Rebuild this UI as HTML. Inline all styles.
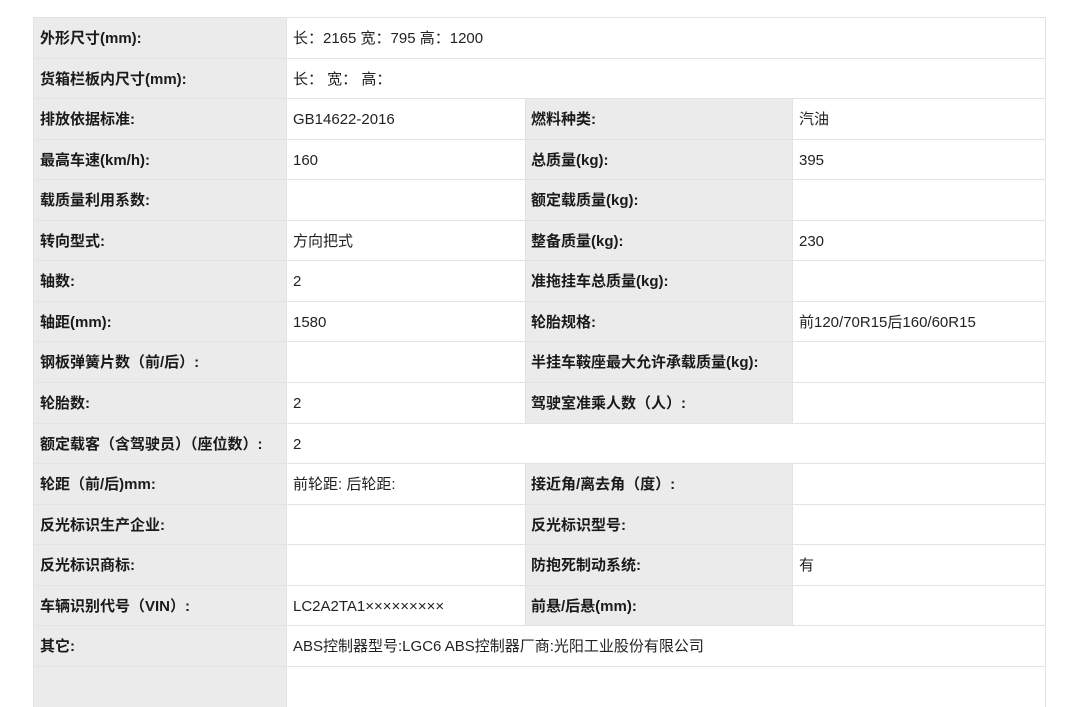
<!DOCTYPE html>
<html><head><meta charset="utf-8"><style>
body{margin:0;background:#fff;width:1080px;height:674px;overflow:hidden;font-family:"Liberation Sans","Noto Sans CJK SC",sans-serif;font-size:15px;color:#222}
.r{position:absolute;left:33px;width:1011px;height:40px;border-top:1px solid #e3e3e3;border-left:1px solid #e3e3e3;border-right:1px solid #e3e3e3}
.c{position:absolute;top:0;height:40px;line-height:41px;padding-left:6px;box-sizing:border-box;white-space:nowrap}
.l{background:#ebebeb;font-weight:bold;color:#1a1a1a}
.a{left:0;width:252px}.b{left:252px;width:239px;border-left:1px solid #e3e3e3}
.d{left:491px;width:267px;border-left:1px solid #e3e3e3;padding-left:5px}.e{left:758px;width:253px;border-left:1px solid #e3e3e3}
.w{left:252px;width:759px;border-left:1px solid #e3e3e3}
</style></head><body>
<div id="t"></div>
<script>
var rows=[
["外形尺寸(mm):","长：2165 宽：795 高：1200"],
["货箱栏板内尺寸(mm):","长：  宽：  高："],
["排放依据标准:","GB14622-2016","燃料种类:","汽油"],
["最高车速(km/h):","160","总质量(kg):","395"],
["载质量利用系数:","","额定载质量(kg):",""],
["转向型式:","方向把式","整备质量(kg):","230"],
["轴数:","2","准拖挂车总质量(kg):",""],
["轴距(mm):","1580","轮胎规格:","前120/70R15后160/60R15"],
["钢板弹簧片数（前/后）:","","半挂车鞍座最大允许承载质量(kg):",""],
["轮胎数:","2","驾驶室准乘人数（人）:",""],
["额定载客（含驾驶员）（座位数）:","2"],
["轮距（前/后)mm:","前轮距: 后轮距:","接近角/离去角（度）:",""],
["反光标识生产企业:","","反光标识型号:",""],
["反光标识商标:","","防抱死制动系统:","有"],
["车辆识别代号（VIN）:","LC2A2TA1×××××××××","前悬/后悬(mm):",""],
["其它:","ABS控制器型号:LGC6 ABS控制器厂商:光阳工业股份有限公司"],
["",""]];
var h="";
rows.forEach(function(r,i){
 var top=(17+i*40.56).toFixed(2);
 h+='<div class="r" style="top:'+top+'px">';
 if(r.length==2){h+='<div class="c l a">'+r[0]+'</div><div class="c w">'+r[1]+'</div>';}
 else{h+='<div class="c l a">'+r[0]+'</div><div class="c b">'+r[1]+'</div><div class="c l d">'+r[2]+'</div><div class="c e">'+r[3]+'</div>';}
 h+='</div>';
});
document.getElementById("t").innerHTML=h;
</script>
</body></html>
